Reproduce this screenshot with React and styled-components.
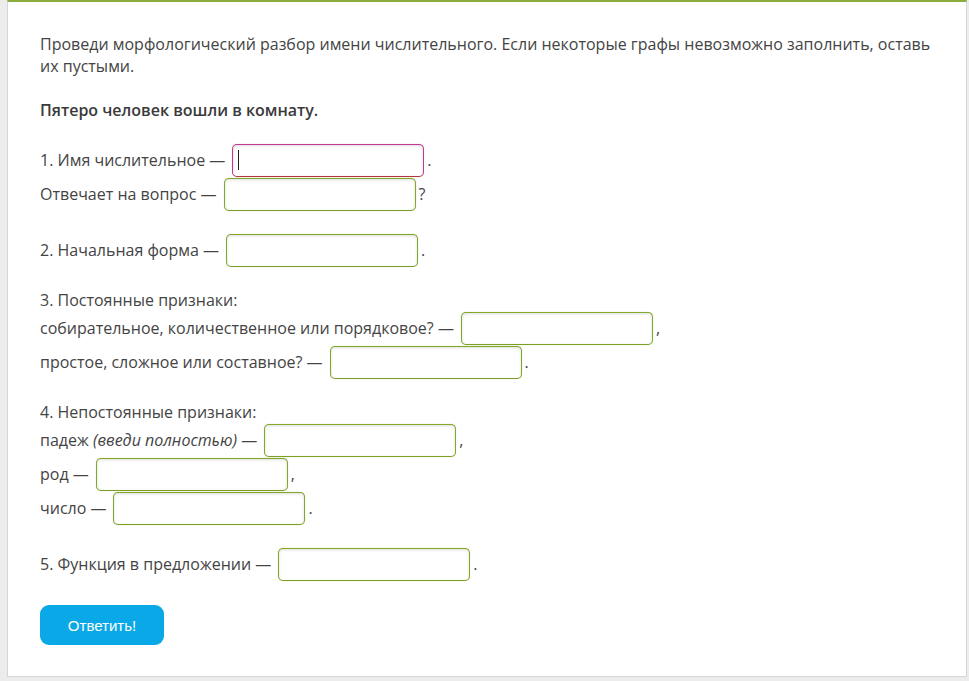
import React from "react";
import styled, { createGlobalStyle } from "styled-components";

const Global = createGlobalStyle`
  html, body { margin: 0; padding: 0; background: #ececec; }
  body { font-family: "Open Sans", "DejaVu Sans", sans-serif; }
`;

const Frame = styled.div`
  height: 681px;
  box-sizing: border-box;
  padding: 0 2px 4px 7px;
`;

const Card = styled.div`
  box-sizing: border-box;
  height: 100%;
  background: #fff;
  border: 1px solid #d6d6d6;
  border-top: 2px solid #8dab3c;
  padding: 31px 32px 0 32px;
  color: #444;
  font-size: 16px;
  line-height: 22px;
`;

const Para = styled.p`
  margin: 0 0 22px;
  font-weight: ${(p) => (p.$bold ? 600 : 400)};
  color: ${(p) => (p.$bold ? "#3a3a3a" : "#444")};
`;

const Section = styled.div`
  margin-bottom: 22px;
`;

const Heading = styled.div`
  height: 22px;
`;

const Row = styled.div`
  display: flex;
  align-items: center;
  height: 34px;
  white-space: pre;
`;

const Field = styled.input`
  box-sizing: border-box;
  width: 192px;
  height: 33px;
  margin: 0 3px 0 7px;
  border: 1px solid ${(p) => (p.$focused ? "#c4368f" : "#82a82a")};
  border-bottom-color: ${(p) => (p.$focused ? "#b8343f" : "#7c9f26")};
  border-radius: 5px;
  background: #fff;
  box-shadow: inset 0 1px 3px rgba(0, 0, 0, 0.14), 0 0 1px rgba(130, 168, 42, 0.5);
  outline: none;
  padding: 0 6px;
  font: inherit;
  color: #333;
`;

const Caret = styled.span`
  display: inline-block;
  width: 1px;
  height: 20px;
  background: #222;
`;

const FocusWrap = styled.span`
  position: relative;
  display: inline-flex;
  align-items: center;
`;

const CaretPos = styled.span`
  position: absolute;
  left: 13px;
  top: 6px;
`;

const Italic = styled.em`
  font-style: italic;
`;

const Button = styled.button`
  margin-top: 2px;
  width: 124px;
  height: 40px;
  border: none;
  border-radius: 9px;
  background: #0ba8e8;
  color: #fff;
  font-family: "Liberation Sans", Arial, sans-serif;
  font-size: 15px;
  cursor: pointer;
`;

function Input({ focused }) {
  if (focused) {
    return (
      <FocusWrap>
        <Field $focused readOnly />
        <CaretPos>
          <Caret />
        </CaretPos>
      </FocusWrap>
    );
  }
  return <Field readOnly />;
}

export default function App() {
  return (
    <>
      <Global />
      <Frame>
        <Card>
          <Para>
            Проведи морфологический разбор имени числительного. Если некоторые графы невозможно заполнить, оставь их пустыми.
          </Para>
          <Para $bold>Пятеро человек вошли в комнату.</Para>

          <Section>
            <Row>
              1. Имя числительное —<Input focused />.
            </Row>
            <Row>
              Отвечает на вопрос —<Input />?
            </Row>
          </Section>

          <Section>
            <Row>
              2. Начальная форма —<Input />.
            </Row>
          </Section>

          <Section>
            <Heading>3. Постоянные признаки:</Heading>
            <Row>
              собирательное, количественное или порядковое? —<Input />,
            </Row>
            <Row>
              простое, сложное или составное? —<Input />.
            </Row>
          </Section>

          <Section>
            <Heading>4. Непостоянные признаки:</Heading>
            <Row>
              падеж <Italic>(введи полностью)</Italic> —<Input />,
            </Row>
            <Row>
              род —<Input />,
            </Row>
            <Row>
              число —<Input />.
            </Row>
          </Section>

          <Section>
            <Row>
              5. Функция в предложении —<Input />.
            </Row>
          </Section>

          <Button>Ответить!</Button>
        </Card>
      </Frame>
    </>
  );
}
